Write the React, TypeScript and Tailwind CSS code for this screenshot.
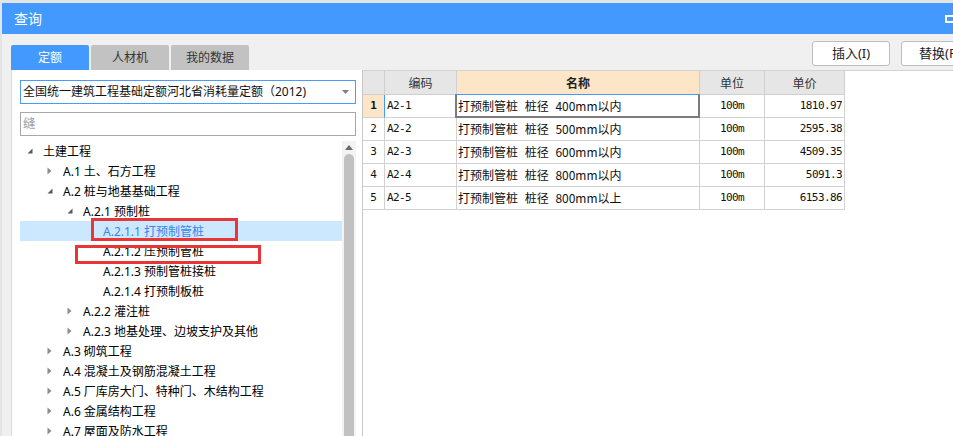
import React from 'react';

type TreeNode = {
  label: string;
  level: number;
  state: 'open' | 'closed' | 'leaf';
  selected?: boolean;
};

const tree: TreeNode[] = [
  { label: '土建工程', level: 0, state: 'open' },
  { label: 'A.1 土、石方工程', level: 1, state: 'closed' },
  { label: 'A.2 桩与地基基础工程', level: 1, state: 'open' },
  { label: 'A.2.1 预制桩', level: 2, state: 'open' },
  { label: 'A.2.1.1 打预制管桩', level: 3, state: 'leaf', selected: true },
  { label: 'A.2.1.2 压预制管桩', level: 3, state: 'leaf' },
  { label: 'A.2.1.3 预制管桩接桩', level: 3, state: 'leaf' },
  { label: 'A.2.1.4 打预制板桩', level: 3, state: 'leaf' },
  { label: 'A.2.2 灌注桩', level: 2, state: 'closed' },
  { label: 'A.2.3 地基处理、边坡支护及其他', level: 2, state: 'closed' },
  { label: 'A.3 砌筑工程', level: 1, state: 'closed' },
  { label: 'A.4 混凝土及钢筋混凝土工程', level: 1, state: 'closed' },
  { label: 'A.5 厂库房大门、特种门、木结构工程', level: 1, state: 'closed' },
  { label: 'A.6 金属结构工程', level: 1, state: 'closed' },
  { label: 'A.7 屋面及防水工程', level: 1, state: 'closed' },
];

const indent = ['pl-[4px]', 'pl-[24px]', 'pl-[44px]', 'pl-[64px]'];

const rows = [
  { code: 'A2-1', name: '打预制管桩 桩径 400mm以内', unit: '100m', price: '1810.97' },
  { code: 'A2-2', name: '打预制管桩 桩径 500mm以内', unit: '100m', price: '2595.38' },
  { code: 'A2-3', name: '打预制管桩 桩径 600mm以内', unit: '100m', price: '4509.35' },
  { code: 'A2-4', name: '打预制管桩 桩径 800mm以内', unit: '100m', price: '5091.3' },
  { code: 'A2-5', name: '打预制管桩 桩径 800mm以上', unit: '100m', price: '6153.86' },
];

const Arrow = ({ state }: { state: TreeNode['state'] }) => {
  if (state === 'open')
    return (
      <svg width="6" height="6" viewBox="0 0 6 6">
        <path d="M5.5 0.5V5.5H0.5Z" fill="#5a5a5a" />
      </svg>
    );
  if (state === 'closed')
    return (
      <svg width="5" height="8" viewBox="0 0 5 8">
        <path d="M0.5 0.5L4.5 4L0.5 7.5Z" fill="#8c8c8c" />
      </svg>
    );
  return null;
};

const App = () => {
  return (
    <div className="relative w-[953px] h-[436px] overflow-hidden bg-[#e4e4e4] font-['Noto_Sans','Noto_Sans_CJK_SC',sans-serif]">
      <div className="ml-[2px] mt-[3px] w-[1000px] h-[433px] flex flex-col bg-[#f0f0f0]">
        {/* title bar */}
        <div className="h-[31px] shrink-0 bg-[#4499fe] flex items-center justify-between pl-[12px] pr-[45px]">
          <span className="text-white text-[14px] leading-none">查询</span>
          <div className="w-[12px] h-[8px] border-2 border-white" />
        </div>

        {/* tabs + buttons */}
        <div className="h-[36px] shrink-0 flex items-start justify-between pl-[9px] pr-[23px]">
          <div className="mt-[11px] flex gap-[2px]">
            <div className="w-[78px] h-[25px] rounded-t-[2px] bg-[#4499fe] text-white text-[12px] flex items-center justify-center">
              定额
            </div>
            <div className="w-[78px] h-[25px] rounded-t-[2px] bg-[#c2c2c2] text-[#333] text-[12px] flex items-center justify-center">
              人材机
            </div>
            <div className="w-[78px] h-[25px] rounded-t-[2px] bg-[#c2c2c2] text-[#333] text-[12px] flex items-center justify-center">
              我的数据
            </div>
          </div>
          <div className="mt-[7px] flex gap-[11px]">
            <button className="w-[78px] h-[25px] bg-white border border-[#bcbcbc] rounded-[3px] text-[13px] text-[#222]">
              插入(I)
            </button>
            <button className="w-[78px] h-[25px] bg-white border border-[#bcbcbc] rounded-[3px] text-[13px] text-[#222]">
              替换(R)
            </button>
          </div>
        </div>

        {/* panels */}
        <div className="flex flex-1 min-h-0">
          <div className="ml-[9px] w-[352px] bg-white border-l border-l-[#dcdcdc] border-r border-r-[#c6c6c6] pl-[8px] pt-[10px] flex flex-col">
            <div className="w-[336px] h-[24px] shrink-0 border border-[#4a9bf5] flex items-center justify-between pl-[2px] pr-[6px]">
              <span className="text-[12px] text-[#111] whitespace-nowrap">
                全国统一建筑工程基础定额河北省消耗量定额（2012)
              </span>
              <svg width="7" height="4" viewBox="0 0 7 4">
                <path d="M0 0H7L3.5 4Z" fill="#808080" />
              </svg>
            </div>
            <div className="mt-[8px] w-[336px] h-[24px] shrink-0 border border-[#a8a8a8] flex items-center pl-[2px]">
              <span className="text-[12.5px] text-[#a0a0a0]">缝</span>
            </div>
            <div className="mt-[5px] flex flex-1 min-h-0">
              <div className="w-[322px]">
                {tree.map((n) => (
                  <div
                    key={n.label}
                    className={`h-[20px] flex items-center ${indent[n.level]} ${n.selected ? 'bg-[#cce8ff]' : ''}`}
                  >
                    <div className="w-[16px] h-[20px] flex items-center pl-[3px]">
                      <Arrow state={n.state} />
                    </div>
                    <span
                      className={`ml-[3px] mt-[2px] text-[12px] whitespace-nowrap ${n.selected ? 'text-[#3b84e8]' : 'text-[#000]'}`}
                    >
                      {n.label}
                    </span>
                  </div>
                ))}
              </div>
              <div className="w-[14px] bg-[#f3f3f3] flex flex-col items-center pt-[4px]">
                <svg width="8" height="5" viewBox="0 0 8 5">
                  <path d="M0 5L4 0L8 5Z" fill="#6a6a6a" />
                </svg>
                <div className="mt-[4px] w-[10px] flex-1 rounded-t-full bg-[#c1c1c1]" />
              </div>
            </div>
          </div>

          <div className="flex-1 bg-white border-t border-t-[#d2d2d2]">
            <div className="w-[482px] text-[12px] text-[#111]">
              <div className="grid grid-cols-[22px_72px_243px_65px_80px] h-[24px]">
                <div className="bg-[#e6e6e6] border-r border-b border-[#cfcfcf]" />
                <div className="bg-[#e6e6e6] border-r border-b border-[#cfcfcf] flex items-center justify-center font-['Noto_Sans_CJK_SC',sans-serif] text-[#333]">
                  编码
                </div>
                <div className="bg-[#fde6c8] border-r border-b border-[#cfcfcf] flex items-center justify-center font-['Noto_Sans_CJK_SC',sans-serif] font-bold text-[#222]">
                  名称
                </div>
                <div className="bg-[#e6e6e6] border-r border-b border-[#cfcfcf] flex items-center justify-center font-['Noto_Sans_CJK_SC',sans-serif] text-[#333]">
                  单位
                </div>
                <div className="bg-[#e6e6e6] border-r border-b border-[#cfcfcf] flex items-center justify-center font-['Noto_Sans_CJK_SC',sans-serif] text-[#333]">
                  单价
                </div>
              </div>
              {rows.map((r, i) => (
                <div key={r.code} className="grid grid-cols-[22px_72px_243px_65px_80px] h-[23px]">
                  <div
                    className={`border-b border-[#d2d2d2] flex items-center justify-center font-['DejaVu_Sans_Mono',monospace] text-[11px] ${
                      i === 0 ? 'bg-[#fde6c8] border-r border-r-[#4499fe] font-bold' : 'bg-white border-r border-r-[#d2d2d2]'
                    }`}
                  >
                    {i + 1}
                  </div>
                  <div className="border-r border-b border-[#d2d2d2] flex items-center pl-[2px] font-['DejaVu_Sans_Mono',monospace] text-[11px] tracking-[-0.6px]">
                    {r.code}
                  </div>
                  <div className="relative border-r border-b border-[#d2d2d2] flex items-center pl-[1px] font-['Noto_Sans_CJK_SC',sans-serif] whitespace-nowrap [word-spacing:4px]">
                    {r.name}
                    {i === 0 && (
                      <div className="absolute -left-[2px] -top-[1px] w-[245px] h-[24px] border-2 border-[#7c7c7c] border-t border-t-[#4499fe]" />
                    )}
                  </div>
                  <div className="border-r border-b border-[#d2d2d2] flex items-center justify-center font-['DejaVu_Sans_Mono',monospace] text-[11px] tracking-[-0.6px]">
                    {r.unit}
                  </div>
                  <div className="border-r border-b border-[#d2d2d2] flex items-center justify-end pr-[2px] font-['DejaVu_Sans_Mono',monospace] text-[11px] tracking-[-0.6px]">
                    {r.price}
                  </div>
                </div>
              ))}
            </div>
          </div>
        </div>
      </div>

      {/* red annotation boxes */}
      <div className="absolute left-[91px] top-[218px] w-[147px] h-[23px] border-[3px] border-[#e83535]" />
      <div className="absolute left-[75px] top-[245px] w-[186px] h-[19px] border-[3px] border-[#e83535]" />
    </div>
  );
};

export default App;
